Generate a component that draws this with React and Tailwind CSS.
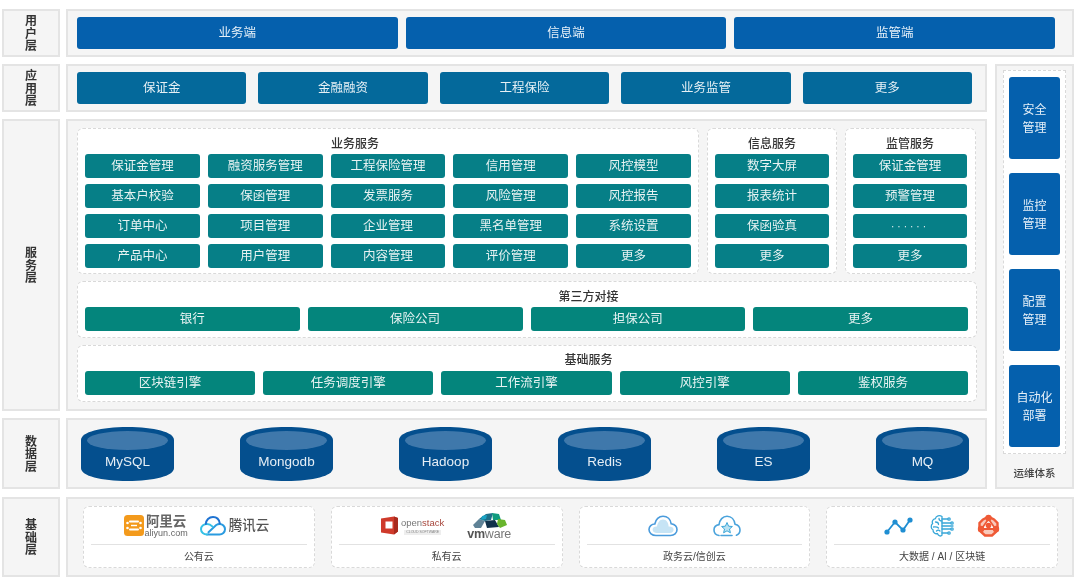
const FONT = { fontFamily: '"Liberation Sans", "Noto Sans CJK SC", sans-serif' };

const businessCells = [
  "保证金管理", "融资服务管理", "工程保险管理", "信用管理", "风控模型",
  "基本户校验", "保函管理", "发票服务", "风险管理", "风控报告",
  "订单中心", "项目管理", "企业管理", "黑名单管理", "系统设置",
  "产品中心", "用户管理", "内容管理", "评价管理", "更多",
];
const infoCells = ["数字大屏", "报表统计", "保函验真", "更多"];
const superviseCells = [
  "保证金管理",
  "预警管理",
  <span key="dots" className="text-[10px] tracking-[3px]">······</span>,
  "更多",
];
const stores = ["MySQL", "Mongodb", "Hadoop", "Redis", "ES", "MQ"];

function LayerLabel({ text, className = "" }) {
  return (
    <div className={`w-[58px] shrink-0 pt-[2px] flex flex-col items-center justify-center border-2 border-[#e4e4e4] bg-[#f5f5f5] text-[12px] leading-[12.5px] font-bold text-[#333] ${className}`}>
      {text.split("").map((c, i) => <span key={i}>{c}</span>)}
    </div>
  );
}

function Cell({ children, color = "bg-[#067f87]" }) {
  return (
    <div className={`h-6 flex items-center justify-center rounded-[3px] text-[12.5px] text-[#e8f3f3] ${color}`}>
      {children}
    </div>
  );
}

function Dashed({ className = "", children }) {
  return (
    <div className={`rounded-md border border-dashed border-[#d9d9d9] bg-white ${className}`}>
      {children}
    </div>
  );
}

function ServiceGroup({ title, className, cols, cells, titleClass = "" }) {
  return (
    <Dashed className={`pl-[7px] pt-[4px] ${className}`}>
      <div className={`h-[21px] flex items-center justify-center text-[12px] font-medium text-[#333] ${titleClass}`}>{title}</div>
      <div className={`grid gap-x-2 gap-y-[6px] ${cols}`}>
        {cells.map((c, i) => <Cell key={i}>{c}</Cell>)}
      </div>
    </Dashed>
  );
}

function StoreRow({ title, cols, cells, titleClass = "" }) {
  return (
    <Dashed className="h-[57px] pl-[7px] pr-[8px] pt-[5px]">
      <div className={`h-5 flex items-center justify-center pl-[124px] text-[12px] font-medium text-[#333] ${titleClass}`}>{title}</div>
      <div className={`grid gap-x-2 ${cols}`}>
        {cells.map((c, i) => <Cell key={i} color="bg-[#04857c]">{c}</Cell>)}
      </div>
    </Dashed>
  );
}

function Cylinder({ label }) {
  return (
    <div className="relative w-[93px] h-[54px]">
      <svg width="93" height="54" viewBox="0 0 93 54" className="block">
        <path d="M0 13 C0 5 20 0 46.5 0 C73 0 93 5 93 13 V41 C93 49 73 54 46.5 54 C20 54 0 49 0 41 Z" fill="#044f8e" />
        <ellipse cx="46.5" cy="13.5" rx="40.5" ry="9.5" fill="#3f78ab" />
      </svg>
      <span className="absolute inset-x-0 top-[26px] text-center text-[13.5px] leading-[18px] text-[#e6eef5]">{label}</span>
    </div>
  );
}

function AliyunLogo() {
  return (
    <div className="flex items-center gap-[1px]">
      <svg width="20" height="21" viewBox="0 0 20 21">
        <rect width="20" height="21" rx="3.5" fill="#f39a1c" />
        <path d="M6 6.5H14M6 14.5H14" stroke="#fff" strokeWidth="2" fill="none" strokeLinecap="round" />
        <path d="M7 10.5H13" stroke="#fff" strokeWidth="1.4" fill="none" />
        <circle cx="3.5" cy="8" r="1.3" fill="#fff" />
        <circle cx="16.5" cy="8" r="1.3" fill="#fff" />
        <circle cx="3.5" cy="13" r="1.3" fill="#fff" />
        <circle cx="16.5" cy="13" r="1.3" fill="#fff" />
      </svg>
      <div className="flex flex-col items-center">
        <span className="text-[13.5px] leading-[14px] font-bold text-[#666]">阿里云</span>
        <span className="text-[9px] leading-[8px] text-[#666]">aliyun.com</span>
      </div>
    </div>
  );
}

function TencentLogo() {
  return (
    <div className="flex items-center gap-[3px]">
      <svg width="26" height="20" viewBox="0 0 26 20" fill="none">
        <path d="M7 18.5H19.5C22.5 18.5 25 16.2 25 13.3C25 10.4 22.6 8 19.5 8C18.3 8 17.2 8.4 16.2 9L8.5 16.3" stroke="#2a9be0" strokeWidth="2" strokeLinecap="round" />
        <path d="M7 18.5C3.6 18.5 1 16.2 1 13.3C1 10.4 3.6 8 7 8C9.2 8 11 9 12.6 10.6" stroke="#35c1e6" strokeWidth="2" strokeLinecap="round" />
        <path d="M5.8 8C6 4.2 9 1 13 1C16.5 1 19.2 3.6 19.8 7.4" stroke="#1f73d2" strokeWidth="2" strokeLinecap="round" />
      </svg>
      <span className="text-[13.5px] leading-4 font-medium text-[#555]">腾讯云</span>
    </div>
  );
}

function OpenstackLogo() {
  return (
    <div className="flex items-center gap-[3px]">
      <svg width="18" height="19" viewBox="0 0 18 19">
        <path d="M1 2.5L14 0.5L18 2V15.5L14 18.5L1 16.5Z" fill="#cf3a2b" />
        <rect x="5.5" y="5.5" width="7" height="7" fill="#fff" />
        <path d="M14 0.5V18.5L18 15.5V2Z" fill="#a82a1e" />
      </svg>
      <div className="flex flex-col items-center w-[43px]">
        <span className="text-[9.5px] leading-3 text-[#777]">open<span className="text-[#a8483e]">stack</span></span>
        <span className="text-[3.5px] leading-[5px] mt-[1px] px-[2px] bg-[#eee] text-[#888]">CLOUD SOFTWARE</span>
      </div>
    </div>
  );
}

function VmwareLogo() {
  return (
    <div className="flex flex-col items-center w-[44px]">
      <svg width="37" height="18" viewBox="0 0 37 18">
        <path d="M2 13L8 7L14 9L10 16H4Z" fill="#5f8296" />
        <path d="M8 7L15 2L22 1L20 8L14 9Z" fill="#1d6f88" />
        <path d="M21 1L28 2L30 8L22 8Z" fill="#0f9b7e" />
        <path d="M14 9L24 8L28 15L16 16Z" fill="#11314a" />
        <path d="M27 7L34 8L36 13L29 16L26 12Z" fill="#69b52d" />
        <path d="M11 4L16 3L15 7L10 8Z" fill="#1aa3c4" />
      </svg>
      <span className="text-[12.5px] leading-[9px] tracking-[-0.2px] text-[#777]"><span className="text-[#555] font-bold">vm</span>ware</span>
    </div>
  );
}

function CloudOutline() {
  return (
    <svg width="30" height="22" viewBox="0 0 30 22" fill="none">
      <path d="M8 20.5C4 20.5 1 18 1 14.6C1 11.4 3.6 9 6.8 9C7.6 4.4 11 1.2 15 1.2C19.4 1.2 22.6 4.4 23.2 8.8C26.6 9.4 29 11.8 29 14.8C29 18.2 26 20.5 22.6 20.5Z" stroke="#4a9bdc" strokeWidth="1.6" />
      <path d="M9 18C6.4 18 4.6 16.6 4.6 14.6C4.6 12.6 6.6 11.4 9 11.6C9.6 7.4 12 4.6 15 4.6C18.6 4.6 20.6 8 20.6 11.6C23.4 11.4 25.6 12.6 25.6 14.8C25.6 16.8 24 18 22 18Z" fill="#c6e4f5" />
    </svg>
  );
}

function CloudStar() {
  return (
    <svg width="28" height="22" viewBox="0 0 28 22" fill="none">
      <path d="M6 20.5C3 20 1 18 1 15C1 12.2 3 10 6 9.6C6.6 4.8 9.8 1.2 14 1.2C18.4 1.2 21.4 4.6 22 9.2C25 9.8 27 12.2 27 15C27 17.4 25.6 19.4 23.4 20.2" stroke="#4aa3dc" strokeWidth="1.6" strokeLinecap="round" />
      <path d="M14 7.5L15.6 11.2L19.4 11.5L16.5 14L17.4 17.8L14 15.8L10.6 17.8L11.5 14L8.6 11.5L12.4 11.2Z" fill="#b9e2f2" stroke="#3ba6d8" strokeWidth="1" />
      <path d="M8 20.5H19" stroke="#4aa3dc" strokeWidth="1.6" strokeLinecap="round" />
    </svg>
  );
}

function LineChartIcon() {
  return (
    <svg width="29" height="18" viewBox="0 0 29 18" fill="none">
      <path d="M3 15L11 5L19 13L26 3" stroke="#1f8ed2" strokeWidth="1.8" />
      <circle cx="3" cy="15" r="2.6" fill="#1f8ed2" />
      <circle cx="11" cy="5" r="2.6" fill="#1f8ed2" />
      <circle cx="19" cy="13" r="2.6" fill="#1f8ed2" />
      <circle cx="26" cy="3" r="2.6" fill="#1f8ed2" />
    </svg>
  );
}

function BrainIcon() {
  return (
    <svg width="25" height="24" viewBox="0 0 25 24" fill="none" stroke="#38a7d8" strokeWidth="1.3" strokeLinecap="round">
      <path d="M12 2.5C9.5 0.8 6 1.8 5.4 4.6C2.8 5 1.6 7.6 2.6 9.6C0.6 11.4 0.8 14.6 3 15.8C2.8 18.6 5.4 20.2 7.4 19.6C8.4 22.2 11 22.6 12 21.2Z" />
      <path d="M5.5 8C7 8 8.5 9 8.5 10.5M3.5 13C5.5 13 7 12.6 8.5 14M6.5 17C7.5 16 9 16 10 17M9 4.5C9 6 10 7 12 7" />
      <path d="M12 5H18M12 9H21M12 12H23M12 15H21M12 19H18" />
      <circle cx="19" cy="5" r="1.2" />
      <circle cx="22" cy="9" r="1.2" />
      <circle cx="22" cy="15" r="1.2" />
      <circle cx="19" cy="19" r="1.2" />
    </svg>
  );
}

function ChainIcon() {
  return (
    <svg width="23" height="24" viewBox="0 0 23 24" fill="none" className="ml-[5px]">
      <path d="M6 5.5L11.5 2.5L17 5.5L20.5 9V16.5L15 21.5H8L2.5 16.5V9Z" fill="#f9c9ba" stroke="#ef5a36" strokeWidth="2.4" />
      <path d="M11.5 5L4.5 15H18.5Z" stroke="#ef5a36" strokeWidth="1.8" fill="#fff" />
      <circle cx="11.5" cy="4" r="3.2" fill="#ef5a36" />
      <circle cx="4" cy="15" r="3.2" fill="#ef5a36" />
      <circle cx="19" cy="15" r="3.2" fill="#ef5a36" />
      <circle cx="11.5" cy="11.5" r="2.8" fill="#ef5a36" />
    </svg>
  );
}

function CloudCard({ label, children, gap }) {
  return (
    <Dashed className="flex-1 h-[62px] px-[7px] flex flex-col">
      <div className={`h-[37px] shrink-0 flex items-center justify-center ${gap}`}>{children}</div>
      <div className="h-[23px] border-t border-[#e2e2e2] flex items-center justify-center text-[10px] text-[#444]">{label}</div>
    </Dashed>
  );
}

export default function App() {
  return (
    <div className="w-[1080px] h-[580px] overflow-hidden bg-white pl-[2px] pt-[9px] flex flex-col gap-[7px] blur-[0.35px]" style={FONT}>
      {/* 用户层 */}
      <div className="flex gap-[6px] w-[1072px]">
        <LayerLabel text="用户层" className="h-[48px]" />
        <div className="flex-1 h-[48px] border-2 border-[#e4e4e4] bg-[#f5f5f5] pl-[9px] pr-[17px] flex items-center gap-2">
          {["业务端", "信息端", "监管端"].map((t) => (
            <div key={t} className="flex-1 h-8 flex items-center justify-center rounded-[3px] bg-[#0560ad] text-[12.5px] text-[#e6f0f8]">{t}</div>
          ))}
        </div>
      </div>

      <div className="flex gap-2 w-[1072px] h-[425px]">
        <div className="w-[985px] flex flex-col gap-[7px]">
          {/* 应用层 */}
          <div className="flex gap-[6px] h-[48px]">
            <LayerLabel text="应用层" />
            <div className="flex-1 border-2 border-[#e4e4e4] bg-[#f5f5f5] pl-[9px] pr-[13px] flex items-center gap-3">
              {["保证金", "金融融资", "工程保险", "业务监管", "更多"].map((t) => (
                <div key={t} className="flex-1 h-8 flex items-center justify-center rounded-[3px] bg-[#04699b] text-[12.5px] text-[#e6f0f5]">{t}</div>
              ))}
            </div>
          </div>

          {/* 服务层 */}
          <div className="flex gap-[6px] h-[292px]">
            <LayerLabel text="服务层" />
            <div className="flex-1 border-2 border-[#e4e4e4] bg-[#f5f5f5] pl-[9px] pr-[8px] pt-[7px] flex flex-col gap-[7px]">
              <div className="flex gap-[8px] h-[146px]">
                <ServiceGroup title="业务服务" className="w-[622px] pr-[7px]" cols="grid-cols-5" cells={businessCells} titleClass="pr-[66px]" />
                <ServiceGroup title="信息服务" className="w-[130px] pr-[7px]" cols="grid-cols-1" cells={infoCells} />
                <ServiceGroup title="监管服务" className="w-[131px] pr-[8px]" cols="grid-cols-1" cells={superviseCells} />
              </div>
              <StoreRow title="第三方对接" cols="grid-cols-4" cells={["银行", "保险公司", "担保公司", "更多"]} />
              <StoreRow title="基础服务" cols="grid-cols-5" cells={["区块链引擎", "任务调度引擎", "工作流引擎", "风控引擎", "鉴权服务"]} titleClass="pb-[2px]" />
            </div>
          </div>

          {/* 数据层 */}
          <div className="flex gap-[6px] h-[71px]">
            <LayerLabel text="数据层" />
            <div className="flex-1 border-2 border-[#e4e4e4] bg-[#f5f5f5] pl-[13px] pr-[16px] flex items-center justify-between">
              {stores.map((s) => <Cylinder key={s} label={s} />)}
            </div>
          </div>
        </div>

        {/* 运维体系 */}
        <div className="w-[79px] border-2 border-[#e4e4e4] bg-[#f5f5f5] px-[6px] pt-[4px] flex flex-col">
          <Dashed className="h-[384px] rounded-none bg-white px-[5px] py-[6px] flex flex-col justify-between">
            {[["安全", "管理"], ["监控", "管理"], ["配置", "管理"], ["自动化", "部署"]].map(([a, b]) => (
              <div key={a} className="h-[82px] pt-[2px] flex flex-col items-center justify-center rounded-[3px] bg-[#0560ad] text-[12px] leading-[18px] text-[#e6f0f8]">
                <span>{a}</span>
                <span>{b}</span>
              </div>
            ))}
          </Dashed>
          <div className="flex-1 pt-[6px] flex items-center justify-center text-[10.5px] font-medium text-[#444]">运维体系</div>
        </div>
      </div>

      {/* 基础层 */}
      <div className="flex gap-[6px] w-[1072px] h-[80px] mt-[1px]">
        <LayerLabel text="基础层" />
        <div className="flex-1 border-2 border-[#e4e4e4] bg-[#f5f5f5] pl-[15px] pr-[14px] flex items-center gap-4">
          <CloudCard label="公有云" gap="gap-[12px] pr-[5px]">
            <AliyunLogo />
            <TencentLogo />
          </CloudCard>
          <CloudCard label="私有云" gap="gap-[23px] pr-[2px]">
            <OpenstackLogo />
            <VmwareLogo />
          </CloudCard>
          <CloudCard label="政务云/信创云" gap="gap-[35px]">
            <CloudOutline />
            <CloudStar />
          </CloudCard>
          <CloudCard label="大数据 / AI / 区块链" gap="gap-[17px]">
            <LineChartIcon />
            <BrainIcon />
            <ChainIcon />
          </CloudCard>
        </div>
      </div>
    </div>
  );
}
